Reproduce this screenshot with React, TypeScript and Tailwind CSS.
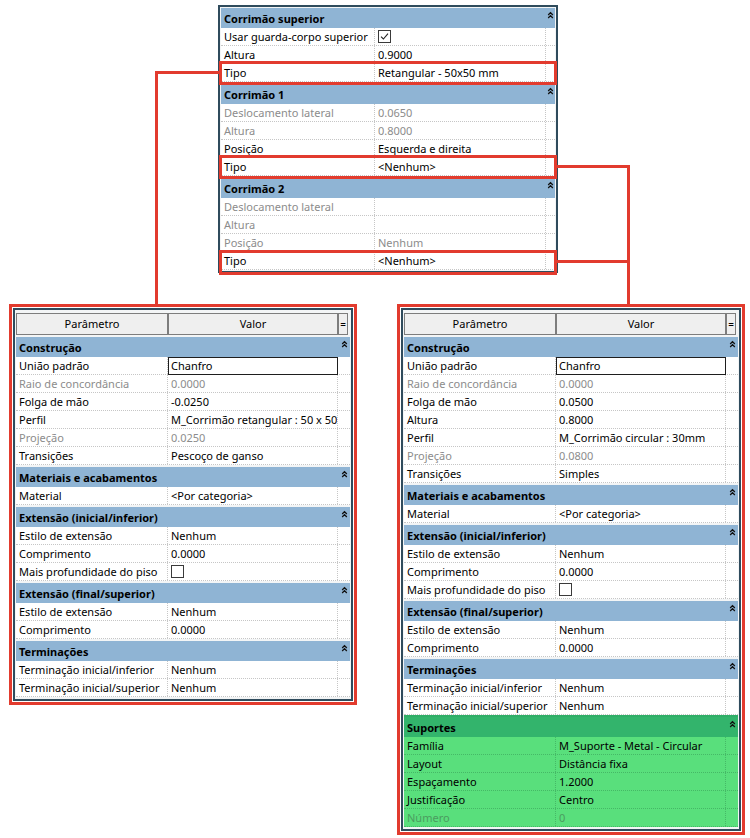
import React from 'react';

type Row = { label: string; value?: string; off?: boolean; check?: boolean; edit?: boolean };
type Section = { title: string; rows: Row[]; green?: boolean };

const topSections: Section[] = [
    {
        title: 'Corrimão superior',
        rows: [
            { label: 'Usar guarda-corpo superior', check: true },
            { label: 'Altura', value: '0.9000' },
            { label: 'Tipo', value: 'Retangular - 50x50 mm' },
        ],
    },
    {
        title: 'Corrimão 1',
        rows: [
            { label: 'Deslocamento lateral', value: '0.0650', off: true },
            { label: 'Altura', value: '0.8000', off: true },
            { label: 'Posição', value: 'Esquerda e direita' },
            { label: 'Tipo', value: '<Nenhum>' },
        ],
    },
    {
        title: 'Corrimão 2',
        rows: [
            { label: 'Deslocamento lateral', value: '', off: true },
            { label: 'Altura', value: '', off: true },
            { label: 'Posição', value: 'Nenhum', off: true },
            { label: 'Tipo', value: '<Nenhum>' },
        ],
    },
];

const common: Section[] = [
    { title: 'Materiais e acabamentos', rows: [{ label: 'Material', value: '<Por categoria>' }] },
    {
        title: 'Extensão (inicial/inferior)',
        rows: [
            { label: 'Estilo de extensão', value: 'Nenhum' },
            { label: 'Comprimento', value: '0.0000' },
            { label: 'Mais profundidade do piso', check: false },
        ],
    },
    {
        title: 'Extensão (final/superior)',
        rows: [
            { label: 'Estilo de extensão', value: 'Nenhum' },
            { label: 'Comprimento', value: '0.0000' },
        ],
    },
    {
        title: 'Terminações',
        rows: [
            { label: 'Terminação inicial/inferior', value: 'Nenhum' },
            { label: 'Terminação inicial/superior', value: 'Nenhum' },
        ],
    },
];

const leftSections: Section[] = [
    {
        title: 'Construção',
        rows: [
            { label: 'União padrão', value: 'Chanfro', edit: true },
            { label: 'Raio de concordância', value: '0.0000', off: true },
            { label: 'Folga de mão', value: '-0.0250' },
            { label: 'Perfil', value: 'M_Corrimão retangular : 50 x 50' },
            { label: 'Projeção', value: '0.0250', off: true },
            { label: 'Transições', value: 'Pescoço de ganso' },
        ],
    },
    ...common,
];

const rightSections: Section[] = [
    {
        title: 'Construção',
        rows: [
            { label: 'União padrão', value: 'Chanfro', edit: true },
            { label: 'Raio de concordância', value: '0.0000', off: true },
            { label: 'Folga de mão', value: '0.0500' },
            { label: 'Altura', value: '0.8000' },
            { label: 'Perfil', value: 'M_Corrimão circular : 30mm' },
            { label: 'Projeção', value: '0.0800', off: true },
            { label: 'Transições', value: 'Simples' },
        ],
    },
    ...common,
    {
        title: 'Suportes',
        green: true,
        rows: [
            { label: 'Família', value: 'M_Suporte - Metal - Circular' },
            { label: 'Layout', value: 'Distância fixa' },
            { label: 'Espaçamento', value: '1.2000' },
            { label: 'Justificação', value: 'Centro' },
            { label: 'Número', value: '0', off: true },
        ],
    },
];

function Chevrons() {
    return (
        <svg width="7" height="8" viewBox="0 0 7 8" className="block">
            <path d="M1.2 4 L3.5 1.6 L5.8 4 M1.2 7 L3.5 4.6 L5.8 7" fill="none" stroke="#111" strokeWidth="1.3" />
        </svg>
    );
}

function Check({ on }: { on: boolean }) {
    return (
        <span className="flex h-[13px] w-[13px] items-center justify-center border border-[#3a3a3a] bg-white">
            {on && (
                <svg width="9" height="9" viewBox="0 0 9 9">
                    <path d="M1 4.6 L3.4 7 L8 1.6" fill="none" stroke="#222" strokeWidth="1.1" />
                </svg>
            )}
        </span>
    );
}

interface GridProps {
    sections: Section[];
    top?: boolean;
}

function Grid({ sections, top }: GridProps) {
    const l = top ? 'w-[154px]' : 'w-[152px]';
    const v = top ? 'w-[171px]' : 'w-[170px]';
    return (
        <div>
            {sections.map((s, si) => (
                <div
                    key={s.title}
                    className={
                        top && si === 0
                            ? ''
                            : s.green
                                ? 'bg-[#2fae67] pt-[2px]'
                                : 'mt-[2px]'
                    }
                >
                    <div className={`flex h-[20px] ${s.green ? 'bg-[#33b46c]' : 'bg-[#8fb4d4]'}`}>
                        <div className="flex flex-1 items-center pl-[3px] pt-px font-bold leading-none">{s.title}</div>
                        <div className={`${top ? 'w-[9px]' : 'w-[12px]'} flex justify-center pt-[3px]`}>
                            <Chevrons />
                        </div>
                    </div>
                    {s.rows.map((r, ri) => {
                        const line = s.green ? 'border-[#45b866]' : 'border-[#c6c6c6]';
                        const tone = r.off ? (s.green ? 'text-[#4b9c5f]' : 'text-[#8c8c8c]') : 'text-black';
                        return (
                            <div
                                key={ri}
                                className={`flex h-[18px] border-b border-dotted ${line} ${s.green ? 'bg-[#59df7c]' : 'bg-white'}`}
                            >
                                <div className={`${l} flex items-center overflow-hidden whitespace-nowrap border-r border-dotted px-[3px] pt-px ${line} ${tone}`}>
                                    {r.label}
                                </div>
                                {r.edit ? (
                                    <div className={`${v} -mb-px flex items-center border border-solid border-[#1e1e1e] px-[2px] ${tone}`}>
                                        {r.value}
                                    </div>
                                ) : (
                                    <div className={`${v} flex items-center overflow-hidden whitespace-nowrap border-r border-dotted px-[3px] ${r.check !== undefined ? '' : 'pt-px'} ${line} ${tone}`}>
                                        {r.check !== undefined ? <Check on={r.check} /> : r.value}
                                    </div>
                                )}
                                <div className="flex-1" />
                            </div>
                        );
                    })}
                </div>
            ))}
        </div>
    );
}

function ColumnHeader() {
    return (
        <div className="flex h-[22px]">
            <div className="flex w-[152px] items-center justify-center border border-[#7d7d7d] bg-[#efefef]">Parâmetro</div>
            <div className="flex w-[170px] items-center justify-center border border-[#7d7d7d] bg-[#efefef]">Valor</div>
            <div className="flex w-[10px] items-center justify-center border border-[#7d7d7d] bg-[#efefef] text-[10px]">=</div>
        </div>
    );
}

function BoxedPanel({ sections, className }: { sections: Section[]; className?: string }) {
    return (
        <div className={`w-[348px] border-[3px] border-[#e23b2e] bg-white p-px ${className ?? ''}`}>
            <div className="border-2 border-[#2f4b5c] bg-[#f3f5f6] px-px pb-[2px] pt-[3px]">
                <ColumnHeader />
                <Grid sections={sections} />
            </div>
        </div>
    );
}

export default function App() {
    return (
        <div className="relative h-[838px] w-[750px] overflow-hidden bg-white font-['Noto_Sans','Open_Sans',sans-serif] text-[11px] text-black">
            <div className="ml-[218px] mt-[5px] w-[340px] border-2 border-[#2f4b5c] bg-[#f3f5f6] px-px pb-px pt-px">
                <Grid sections={topSections} top />
            </div>

            <div className="mt-[31px] flex items-start">
                <BoxedPanel sections={leftSections} className="ml-[9px]" />
                <BoxedPanel sections={rightSections} className="ml-[40px]" />
            </div>

            {/* highlight boxes */}
            <div className="absolute left-[219px] top-[61px] h-[24px] w-[338px] border-[3px] border-[#e23b2e]" />
            <div className="absolute left-[219px] top-[155px] h-[24px] w-[338px] border-[3px] border-[#e23b2e]" />
            <div className="absolute left-[219px] top-[250px] h-[25px] w-[338px] border-[3px] border-[#e23b2e]" />

            {/* connectors */}
            <div className="absolute left-[155px] top-[71px] h-[3px] w-[65px] bg-[#e23b2e]" />
            <div className="absolute left-[155px] top-[71px] h-[235px] w-[3px] bg-[#e23b2e]" />
            <div className="absolute left-[557px] top-[165px] h-[3px] w-[73px] bg-[#e23b2e]" />
            <div className="absolute left-[557px] top-[260px] h-[3px] w-[73px] bg-[#e23b2e]" />
            <div className="absolute left-[627px] top-[165px] h-[141px] w-[3px] bg-[#e23b2e]" />
        </div>
    );
}
